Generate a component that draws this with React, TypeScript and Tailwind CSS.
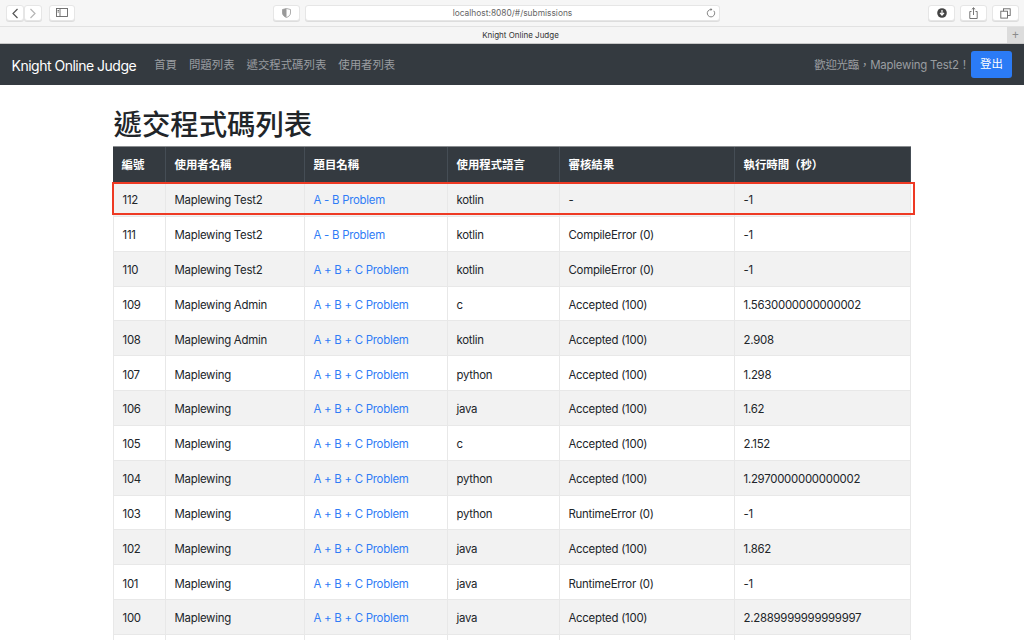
const cjk = "font-['Inter','Noto_Sans_CJK_TC',sans-serif]";

const submissions = [
  ["112", "Maplewing Test2", "A - B Problem", "kotlin", "-", "-1"],
  ["111", "Maplewing Test2", "A - B Problem", "kotlin", "CompileError (0)", "-1"],
  ["110", "Maplewing Test2", "A + B + C Problem", "kotlin", "CompileError (0)", "-1"],
  ["109", "Maplewing Admin", "A + B + C Problem", "c", "Accepted (100)", "1.5630000000000002"],
  ["108", "Maplewing Admin", "A + B + C Problem", "kotlin", "Accepted (100)", "2.908"],
  ["107", "Maplewing", "A + B + C Problem", "python", "Accepted (100)", "1.298"],
  ["106", "Maplewing", "A + B + C Problem", "java", "Accepted (100)", "1.62"],
  ["105", "Maplewing", "A + B + C Problem", "c", "Accepted (100)", "2.152"],
  ["104", "Maplewing", "A + B + C Problem", "python", "Accepted (100)", "1.2970000000000002"],
  ["103", "Maplewing", "A + B + C Problem", "python", "RuntimeError (0)", "-1"],
  ["102", "Maplewing", "A + B + C Problem", "java", "Accepted (100)", "1.862"],
  ["101", "Maplewing", "A + B + C Problem", "java", "RuntimeError (0)", "-1"],
  ["100", "Maplewing", "A + B + C Problem", "java", "Accepted (100)", "2.2889999999999997"],
  // next row starts right at the bottom edge, its text is below the fold
  ["", "", "", "", "", ""],
];

const columns = "grid grid-cols-[53px_139px_143px_112px_175px_1fr]";
const headers = ["編號", "使用者名稱", "題目名稱", "使用程式語言", "審核結果", "執行時間（秒）"];
const navLinks = ["首頁", "問題列表", "遞交程式碼列表", "使用者列表"];

function ToolButton({ width, children }: { width: string; children: React.ReactNode }) {
  return (
    <div className={`flex h-[16px] items-center justify-center rounded-[3px] border border-[#e6e6e6] bg-white shadow-[0_1px_0_#dddddd] ${width}`}>
      {children}
    </div>
  );
}

function BrowserBar() {
  return (
    <div className="bg-[#f6f6f6] text-[#4a4a4a]">
      <div className="flex h-[27px] items-center border-b border-[#e2e2e2] pl-[6px] pr-[4px]">
        <ToolButton width="w-[18px]">
          <svg width="8" height="11" viewBox="0 0 8 11" fill="none" stroke="#555555" strokeWidth="1.2"><path d="M6.5 1 2 5.5 6.5 10" /></svg>
        </ToolButton>
        <ToolButton width="w-[18px]">
          <svg width="8" height="11" viewBox="0 0 8 11" fill="none" stroke="#b5b5b5" strokeWidth="1.2"><path d="M1.5 1 6 5.5 1.5 10" /></svg>
        </ToolButton>
        <ToolButton width="w-[26px] ml-[7px]">
          <svg width="12" height="10" viewBox="0 0 12 10" fill="none" stroke="#666666" strokeWidth="0.9"><rect x="0.5" y="0.5" width="11" height="8" /><path d="M4 0.5v8" /><path d="M1.5 2.5h1.5M1.5 4h1.5" /></svg>
        </ToolButton>
        <ToolButton width="w-[27px] ml-[198px]">
          <svg width="9" height="10" viewBox="0 0 9 10"><path d="M4.5 0.5 8.5 1.5V5c0 2.2-2 3.8-4 4.5-2-.7-4-2.3-4-4.5V1.5Z" fill="#ffffff" stroke="#999999" strokeWidth="0.8" /><path d="M4.5 0.5V9.5C2.5 8.8.5 7.2.5 5V1.5Z" fill="#999999" /></svg>
        </ToolButton>
        <div className="relative ml-[5px] flex h-[16px] w-[415px] items-center justify-center rounded-[3px] border border-[#e6e6e6] bg-white shadow-[0_1px_0_#dddddd]">
          <span className="font-['Inter',sans-serif] text-[8.4px] text-[#666666]">localhost:8080/#/submissions</span>
          <svg className="absolute right-[3px] top-[2px]" width="10" height="10" viewBox="0 0 10 10" fill="none" stroke="#777777" strokeWidth="0.9"><path d="M7.8 2.8A3.7 3.7 0 1 1 5 1.5" /><path d="M4.6 0 6.4 1.5 4.6 3" fill="#777777" stroke="none" /></svg>
        </div>
        <ToolButton width="w-[27px] ml-[208px]">
          <svg width="10" height="10" viewBox="0 0 10 10"><circle cx="5" cy="5" r="4.8" fill="#444444" /><path d="M5 2v4.5M3 4.8 5 7l2-2.2" fill="none" stroke="#ffffff" strokeWidth="1.2" /></svg>
        </ToolButton>
        <ToolButton width="w-[27px] ml-[5px]">
          <svg width="9" height="12" viewBox="0 0 9 12" fill="none" stroke="#666666" strokeWidth="0.9"><path d="M2.5 4.5H.8v7h7.4v-7H6.5" /><path d="M4.5 8V.8M2.8 2.4 4.5.8l1.7 1.6" /></svg>
        </ToolButton>
        <ToolButton width="w-[27px] ml-[5px]">
          <svg width="11" height="11" viewBox="0 0 11 11" fill="none" stroke="#666666" strokeWidth="0.9"><rect x="3.5" y="0.8" width="6.7" height="6.7" /><rect x="0.8" y="3.2" width="6.7" height="6.9" fill="#ffffff" /></svg>
        </ToolButton>
      </div>
      <div className="flex h-[17px] items-center border-b border-[#c8c8c8] bg-[#f5f5f5]">
        <span className="flex-1 pl-[34px] text-center font-['Inter',sans-serif] text-[8px] text-[#333333]">Knight Online Judge</span>
        <span className="flex h-full w-[17px] items-center justify-center bg-[#dcdcdc] text-[12px] leading-none text-[#8a8a8a]">+</span>
      </div>
    </div>
  );
}

function Navbar() {
  return (
    <nav className={`flex h-[41px] items-center bg-[#343a40] pl-[11.5px] pr-[12px] ${cjk}`}>
      <span className="pt-[2px] text-[14px] tracking-[-0.5px] text-white">Knight Online Judge</span>
      <div className="ml-[18px] flex gap-[12px] pt-[3px] text-[11.4px] text-[#9a9da0]">
        {navLinks.map((link) => (
          <span key={link}>{link}</span>
        ))}
      </div>
      <span className="ml-auto pt-[3px] text-[11.4px] tracking-[-0.2px] text-[#9a9da0]">歡迎光臨，Maplewing Test2！</span>
      <button className="ml-[1px] h-[27px] w-[41px] rounded-[3px] bg-[#2b7bf6] pt-[1px] text-[11.4px] text-white">登出</button>
    </nav>
  );
}

export default function App() {
  return (
    <div className="h-[640px] overflow-hidden bg-white">
      <BrowserBar />
      <Navbar />
      <main className={`relative mx-auto w-[798px] ${cjk}`}>
        <h1 className="h-[61px] pl-[0.5px] pt-[20px] text-[28.4px] font-medium leading-[40px] text-[#212529]">遞交程式碼列表</h1>
        <div className={`${columns} h-[36px] border-t border-[#8a8d90] bg-[#343a40] text-[11.4px] font-semibold text-white`}>
          {headers.map((header) => (
            <div key={header} className="flex items-center border-r border-[#454d55] pl-[8.5px] pt-[2px]">
              {header}
            </div>
          ))}
        </div>
        {submissions.map((row, index) => (
          <div
            key={index}
            className={`${columns} h-[34.85px] border-b border-[#e8e8e8] text-[11.4px] tracking-[-0.25px] text-[#212529] ${index % 2 === 0 ? "bg-[#f2f2f2]" : "bg-white"}`}
          >
            {row.map((cell, cellIndex) => (
              <div
                key={cellIndex}
                className={`flex items-center border-r border-[#e8e8e8] pl-[8.5px] pt-[4px] ${cellIndex === 0 ? "border-l" : ""} ${cellIndex === 2 ? "text-[#2f7cf6]" : ""}`}
              >
                {cell}
              </div>
            ))}
          </div>
        ))}
        <div className="absolute left-[-1px] top-[97px] h-[33px] w-[803px] border-2 border-[#ee3a24]" />
      </main>
    </div>
  );
}
